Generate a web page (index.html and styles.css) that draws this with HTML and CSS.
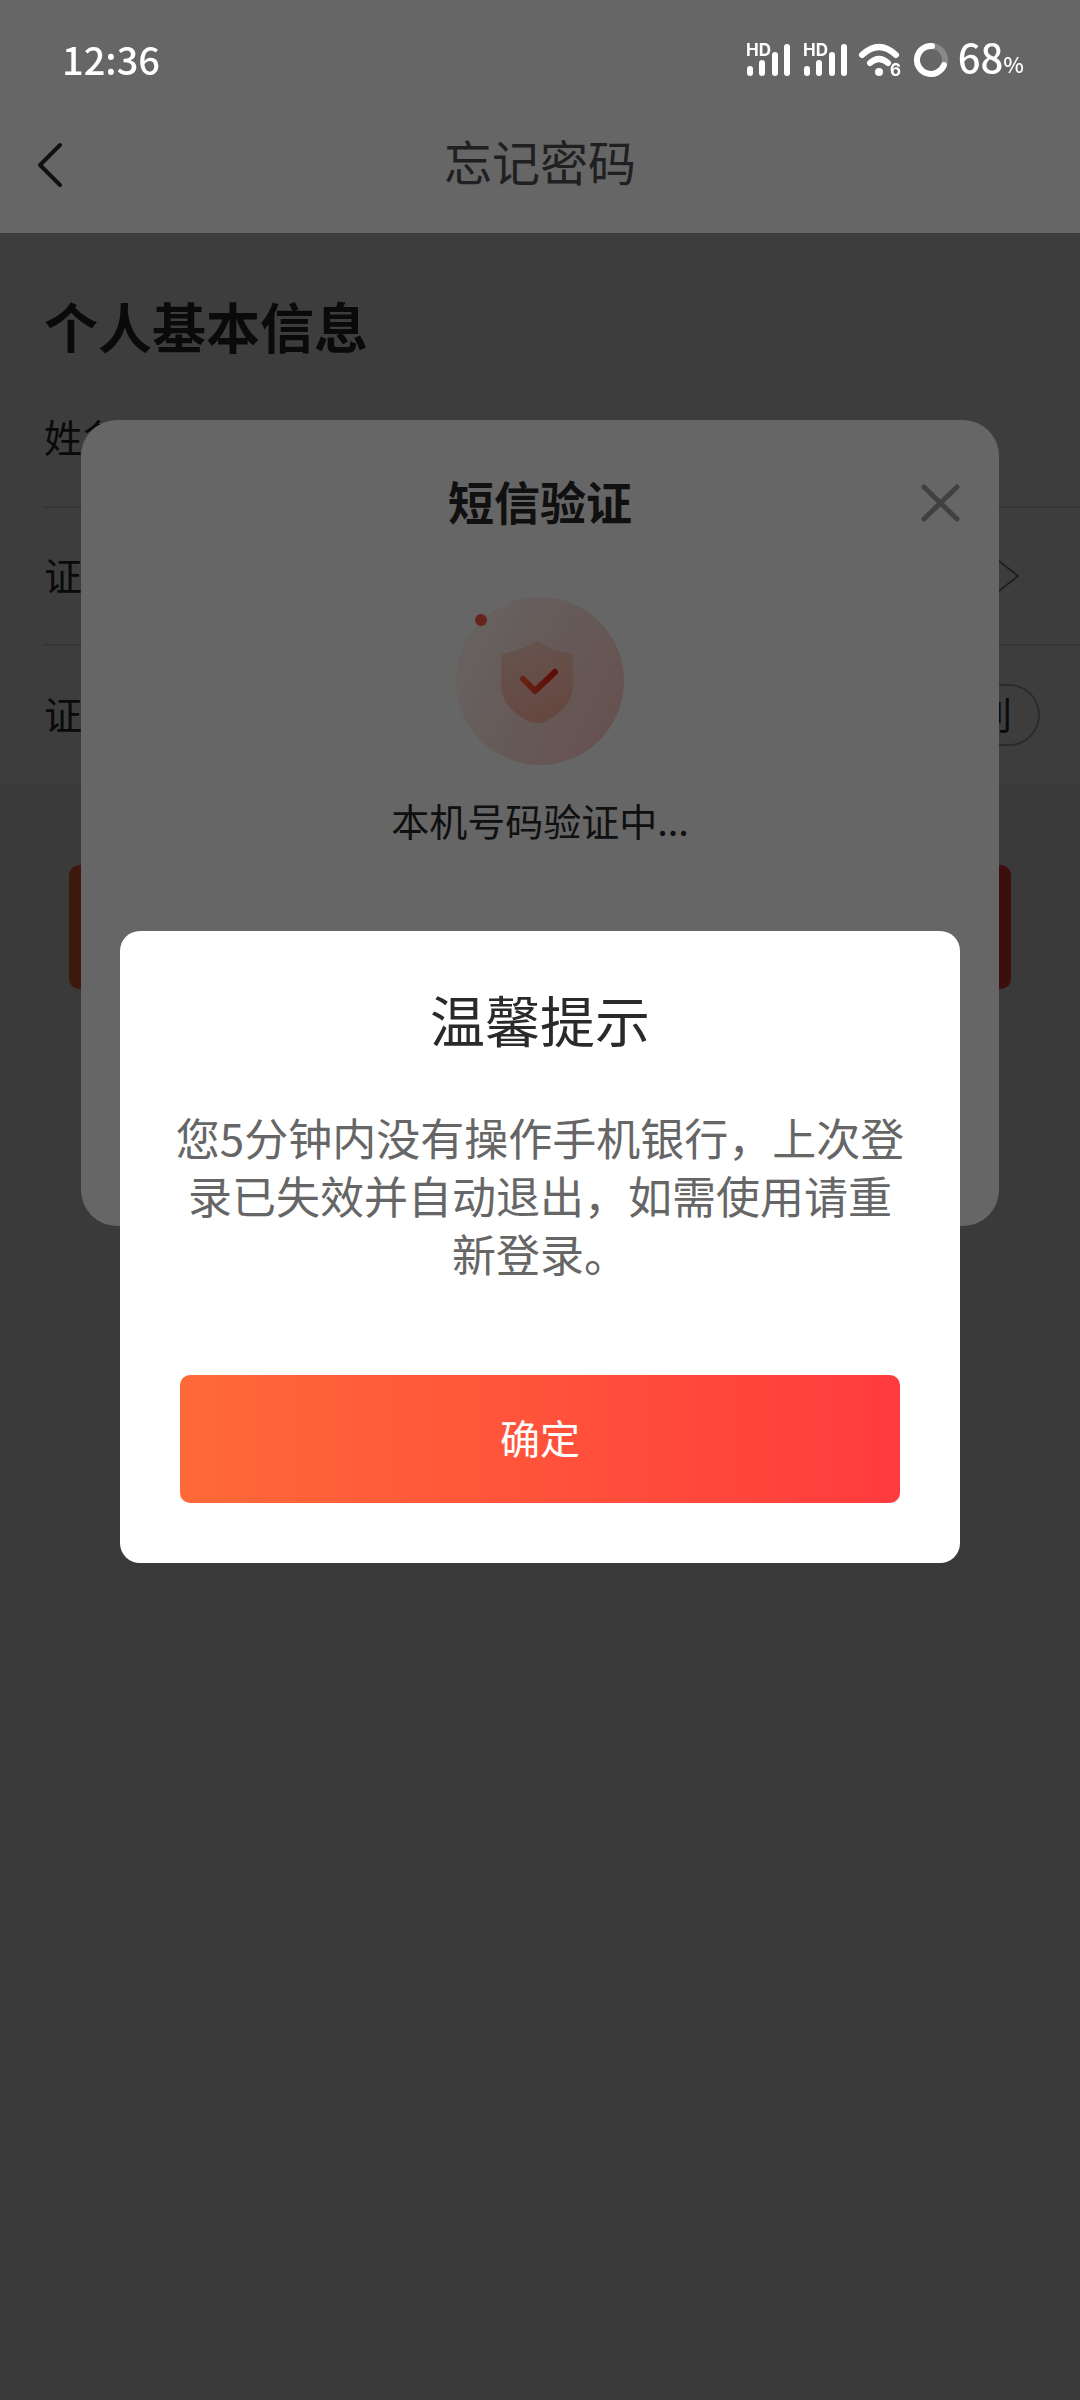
FILE: index.html
```html
<!DOCTYPE html>
<html lang="zh-CN">
<head>
<meta charset="utf-8">
<meta name="viewport" content="width=device-width, initial-scale=1">
<title>忘记密码</title>
<link rel="stylesheet" href="styles.css">
</head>
<body>
<div class="app">
  <header class="navbar">
    <button class="icon-button" type="button" aria-label="返回">
      <svg width="30" height="48" viewBox="0 0 30 48" fill="none" stroke="#2a2a2a" stroke-width="4" stroke-linecap="round" stroke-linejoin="round"><path d="M26 4 6 24l20 20"/></svg>
    </button>
    <h1 class="navbar-title">忘记密码</h1>
  </header>

  <main>
    <form class="form">
      <section class="form-panel">
        <h2 class="form-heading">个人基本信息</h2>
        <div class="row">
          <label for="name">姓名</label>
          <input class="row-input" id="name" type="text">
        </div>
        <div class="row">
          <label for="idtype">证件类型</label>
          <input class="row-input" id="idtype" type="text" readonly>
          <svg class="row-arrow" width="30" height="40" viewBox="0 0 30 40" fill="none" stroke="#888" stroke-width="2" stroke-linejoin="round"><path d="M4 1l24 19L4 39"/></svg>
        </div>
        <div class="row">
          <label for="idno">证件号码</label>
          <input class="row-input" id="idno" type="text">
          <button class="scan" type="button">识别</button>
        </div>
      </section>
      <button class="primary next" type="button">下一步</button>
    </form>
  </main>
</div>

<div class="mask mask-sms">
  <section class="sms" role="dialog" aria-labelledby="sms-title">
    <header class="sms-header">
      <h2 class="sms-title" id="sms-title">短信验证</h2>
      <button class="icon-button" type="button" aria-label="关闭">
        <svg width="40" height="40" viewBox="0 0 40 40" fill="none" stroke="#a2a2a6" stroke-width="5" stroke-linecap="round"><path d="M3 4l33 32M36 4 3 36"/></svg>
      </button>
    </header>
    <svg class="shield" width="168" height="168" viewBox="0 0 168 168">
      <defs>
        <linearGradient id="disc" x1="0.15" y1="0.3" x2="0.9" y2="0.7"><stop offset="0" stop-color="#fff0ec"/><stop offset="1" stop-color="#ffd0ca"/></linearGradient>
        <linearGradient id="body" x1="0.3" y1="0" x2="0.7" y2="1"><stop offset="0" stop-color="#ffcfc2"/><stop offset="1" stop-color="#ffb0a2"/></linearGradient>
        <linearGradient id="tick" x1="0" y1="0" x2="1" y2="0"><stop offset="0" stop-color="#ff5a32"/><stop offset="1" stop-color="#f01818"/></linearGradient>
      </defs>
      <circle cx="84" cy="84" r="84" fill="url(#disc)"/>
      <path d="M78 45Q80 43 83 45Q97 55 113 56Q117 57 117 61V88C117 106 103 118 88 125Q81 127 74 125C59 118 45 106 45 88V61Q45 57 49 56Q65 54 78 45Z" fill="url(#body)"/>
      <path d="M67 82l12 12 20-19" fill="none" stroke="url(#tick)" stroke-width="6" stroke-linecap="round" stroke-linejoin="round"/>
      <circle cx="25" cy="23" r="6" fill="#ff5a4a"/>
    </svg>
    <p class="sms-text">本机号码验证中...</p>
  </section>
</div>

<div class="mask mask-alert">
  <section class="alert" role="alertdialog" aria-labelledby="alert-title">
    <h2 class="alert-title" id="alert-title">温馨提示</h2>
    <p class="alert-text">您5分钟内没有操作手机银行，上次登录已失效并自动退出，如需使用请重新登录。</p>
    <button class="primary" type="button">确定</button>
  </section>
</div>

<div class="statusbar">
  <time class="clock">12:36</time>
  <div class="indicators">
    <svg width="48" height="50" viewBox="-2 -8 48 50"><path fill="none" stroke="#fff" stroke-linecap="round" stroke-width="6" d="M4 26v4M16 20v10M29 12v18M41 4v26"/><text class="badge" x="0" y="13">HD</text></svg>
    <svg width="48" height="50" viewBox="-2 -8 48 50"><path fill="none" stroke="#fff" stroke-linecap="round" stroke-width="6" d="M4 26v4M16 20v10M29 12v18M41 4v26"/><text class="badge" x="0" y="13">HD</text></svg>
    <svg width="46" height="50" viewBox="0 -8 46 50"><path fill="none" stroke="#fff" stroke-linecap="round" stroke-width="6" d="M4 12Q21-4 38 12M12 20q9-8 18 0"/><circle cx="21" cy="29" r="4" fill="#fff"/><text class="badge" x="32" y="33">6</text></svg>
    <svg width="36" height="34" viewBox="0 0 36 34" fill="none" stroke-width="6" stroke-linecap="round"><circle cx="18" cy="17" r="14" stroke="#898989"/><path stroke="#fff" d="M19 3A14 14 0 1 0 31 22"/></svg>
    <span class="battery">68<small>%</small></span>
  </div>
</div>
</body>
</html>
```
FILE: styles.css
```css
* {
  box-sizing: border-box;
}

body {
  margin: 0;
  background: #f2f2f2;
  color: #2a2a2a;
  font-family: "Noto Sans CJK SC", sans-serif;
}

h1,
h2,
p {
  margin: 0;
}

button,
input {
  font: inherit;
  color: inherit;
}

.app {
  min-height: 100vh;
}

.icon-button {
  display: flex;
  padding: 0;
  border: 0;
  background: none;
}

/* Top bar */
.navbar {
  position: relative;
  z-index: 2;
  display: grid;
  grid-template-columns: 64px 1fr 64px;
  align-items: center;
  padding: 96px 34px 0;
  height: 233px;
  background: #fff;
}

.navbar-title {
  padding-bottom: 10px;
  text-align: center;
  color: #505056;
  font-size: 48px;
  font-weight: 400;
  line-height: 72px;
}

/* Form */
.form-panel {
  padding: 58px 0 0 44px;
  background: #fff;
}

.form-heading {
  padding-bottom: 9px;
  font-size: 54px;
  font-weight: 700;
  line-height: 70px;
}

.row {
  display: flex;
  align-items: center;
  gap: 20px;
  height: 138px;
  padding-right: 40px;
  border-bottom: 2px solid #e1e1e1;
  font-size: 38px;
}

.row label {
  padding-bottom: 6px;
}

.row:last-child {
  border-bottom: 0;
}

.row-input {
  flex: 1;
  min-width: 0;
  border: 0;
  background: none;
}

.row-arrow {
  margin-right: 20px;
}

.scan {
  height: 62px;
  padding: 0 26px 4px;
  border: 2px solid #b5b5b5;
  border-radius: 31px;
  background: none;
  font-size: 38px;
  line-height: 54px;
}

.primary {
  height: 128px;
  padding-bottom: 4px;
  border: 0;
  border-radius: 10px;
  background: linear-gradient(90deg, #ff6a38, #ff3b3d);
  color: #fff;
  font-size: 40px;
}

.next {
  display: block;
  width: calc(100% - 138px);
  height: 124px;
  margin: 81px auto 0;
}

/* Dialogs */
.mask {
  position: fixed;
  inset: 0;
  display: flex;
  justify-content: center;
}

.mask-sms {
  z-index: 1;
  align-items: flex-start;
  padding: 420px 81px 0;
  background: rgb(0 0 0 / 40%);
}

.mask-alert {
  z-index: 3;
  align-items: center;
  padding: 93px 120px 0;
  background: rgb(0 0 0 / 60%);
}

.sms {
  display: flex;
  flex: 1;
  flex-direction: column;
  align-items: center;
  min-height: 806px;
  border-radius: 36px;
  background: #fff;
}

.sms-header {
  display: grid;
  grid-template-columns: 40px 1fr 40px;
  align-items: center;
  align-self: stretch;
  padding: 48px 38px 0;
}

.sms-title {
  grid-column: 2;
  padding-bottom: 6px;
  text-align: center;
  font-size: 46px;
  font-weight: 700;
  line-height: 64px;
}

.shield {
  margin-top: 59px;
}

.sms-text {
  margin-top: 27px;
  font-size: 38px;
  line-height: 56px;
}

.alert {
  display: flex;
  flex: 1;
  flex-direction: column;
  padding: 47px 50px 60px;
  border-radius: 20px;
  background: #fff;
  text-align: center;
}

.alert-title {
  font-size: 55px;
  font-weight: 400;
  line-height: 80px;
}

.alert-text {
  margin: 50px 0 93px;
  color: #666;
  font-size: 44px;
  line-height: 58px;
}

.alert .primary {
  margin: 0 10px;
}

/* System status bar, drawn above the masks */
.statusbar {
  position: fixed;
  inset: 0 0 auto;
  z-index: 4;
  display: flex;
  align-items: center;
  justify-content: space-between;
  height: 120px;
  padding: 0 56px 0 62px;
  color: #fff;
}

.clock,
.battery {
  padding-bottom: 2px;
  font-weight: 500;
  line-height: 60px;
}

.clock {
  font-size: 38px;
}

.battery {
  font-size: 40px;
}

.battery small {
  font-size: 22px;
}

.badge {
  fill: #fff;
  font: 700 17px Inter, sans-serif;
}

.indicators {
  display: flex;
  align-items: center;
  gap: 9px;
}
```
